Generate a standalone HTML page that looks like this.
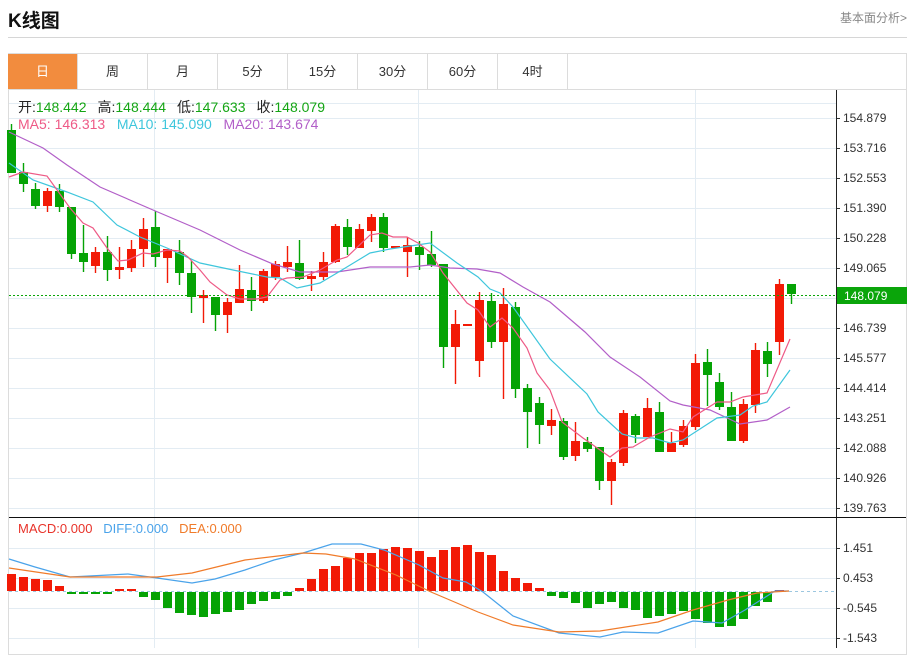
<!DOCTYPE html>
<html><head><meta charset="utf-8">
<style>
body{margin:0;width:913px;height:648px;background:#fff;font-family:"Liberation Sans","Noto Sans CJK SC",sans-serif;overflow:hidden;position:relative}
.t{position:absolute;left:8px;top:6px;font-size:19px;font-weight:bold;color:#111}
.r{position:absolute;right:6px;top:9px;font-size:12px;color:#888}
.sep{position:absolute;left:8px;top:37px;width:899px;height:1px;background:#d6d6d6}
.box{position:absolute;left:8px;top:53px;width:897px;height:600px;border:1px solid #dcdcdc}
.tab{position:absolute;top:54px;height:35px;width:69px;border-right:1px solid #dcdcdc;border-bottom:1px solid #dcdcdc;text-align:center;line-height:35px;font-size:13px;color:#333}
.tab.on{background:#f28c3e;color:#fff}
.tabrest{position:absolute;top:54px;left:567px;width:339px;height:35px;border-bottom:1px solid #dcdcdc}
.l1{position:absolute;left:18px;top:97px;font-size:14px;color:#222;word-spacing:0}
.l1 b{font-weight:normal;color:#14a514;margin-right:11px}
.l2{position:absolute;left:18px;top:116px;font-size:14px}
.m{position:absolute;left:18px;top:521px;font-size:13px}
svg{position:absolute;left:0;top:0}
</style></head><body>
<div class="t">K线图</div>
<div class="r">基本面分析&gt;</div>
<div class="sep"></div>
<div class="box"></div>
<div class="tab on" style="left:8px">日</div>
<div class="tab" style="left:78px">周</div>
<div class="tab" style="left:148px">月</div>
<div class="tab" style="left:218px">5分</div>
<div class="tab" style="left:288px">15分</div>
<div class="tab" style="left:358px">30分</div>
<div class="tab" style="left:428px">60分</div>
<div class="tab" style="left:498px">4时</div>
<div class="tabrest"></div>
<svg id="s" width="913" height="648" xmlns="http://www.w3.org/2000/svg"></svg>
<div class="l1">开:<b>148.442</b>高:<b>148.444</b>低:<b>147.633</b>收:<b>148.079</b></div>
<div class="l2"><span style="color:#ee5a86">MA5: 146.313</span>&nbsp;&nbsp; <span style="color:#3ec6dc">MA10: 145.090</span>&nbsp;&nbsp; <span style="color:#b25fc8">MA20: 143.674</span></div>
<div class="m"><span style="color:#e8332a">MACD:0.000</span>&nbsp;&nbsp; <span style="color:#4aa3ea">DIFF:0.000</span>&nbsp;&nbsp; <span style="color:#f07b2a">DEA:0.000</span></div>
<script>
var s='';
var G='#e3ecf3';
var labs=['154.879','153.716','152.553','151.390','150.228','149.065','','146.739','145.577','144.414','143.251','142.088','140.926','139.763'];
for(var i=0;i<14;i++){var y=118+30*i;s+='<line x1="9" x2="836" y1="'+(y+.5)+'" y2="'+(y+.5)+'" stroke="'+G+'"/>';
 if(labs[i]) s+='<line x1="836" x2="840" y1="'+(y+.5)+'" y2="'+(y+.5)+'" stroke="#333"/><text x="843" y="'+(y+4)+'" font-size="12" fill="#333">'+labs[i]+'</text>';}
s+='<line x1="9" x2="836" y1="103.5" y2="103.5" stroke="'+G+'"/>';
[154.5,418.5,695.5].forEach(function(x){s+='<line x1="'+x+'" x2="'+x+'" y1="90" y2="648" stroke="'+G+'"/>';});
[548,578,608,638].forEach(function(y,k){s+='<line x1="9" x2="836" y1="'+(y+.5)+'" y2="'+(y+.5)+'" stroke="'+G+'"/><line x1="836" x2="840" y1="'+(y+.5)+'" y2="'+(y+.5)+'" stroke="#333"/><text x="843" y="'+(y+4)+'" font-size="12" fill="#333">'+['1.451','0.453','-0.545','-1.543'][k]+'</text>';});
s+='<line x1="9" x2="836" y1="591.5" y2="591.5" stroke="#9cc7e0" stroke-dasharray="3,3"/>';
s+='<line x1="836.5" x2="836.5" y1="90" y2="648" stroke="#222"/>';
s+='<line x1="9" x2="906" y1="517.5" y2="517.5" stroke="#111"/>';
var C=[[130,173,124,173,'g'],[172,184,163,192,'g'],[189,206,183,209,'g'],[191,206,188,212,'r'],[191,207,184,212,'g'],[207,254,207,259,'g'],[253,262,225,272,'g'],[252,266,247,273,'r'],[252,270,236,281,'g'],[267,270,247,279,'r'],[249,268,240,272,'r'],[229,249,218,267,'r'],[227,257,211,267,'g'],[249,258,249,283,'r'],[252,273,240,285,'g'],[273,297,261,313,'g'],[295,298,290,323,'r'],[297,315,297,331,'g'],[302,315,298,333,'r'],[289,303,265,303,'r'],[290,301,277,311,'g'],[271,301,269,303,'r'],[264,277,261,280,'r'],[262,267,246,272,'r'],[263,279,240,280,'g'],[276,279,271,291,'r'],[262,277,252,280,'r'],[226,262,224,263,'r'],[227,247,219,255,'g'],[229,248,224,248,'r'],[217,231,214,242,'r'],[217,248,213,252,'g'],[246,248,246,248,'r'],[245,252,237,277,'r'],[247,255,241,270,'g'],[254,265,231,267,'g'],[264,347,264,368,'g'],[324,347,310,384,'r'],[324,326,324,326,'r'],[300,361,292,377,'r'],[301,342,293,348,'g'],[304,342,288,399,'r'],[307,389,302,398,'g'],[388,412,384,448,'g'],[403,425,397,444,'g'],[420,426,409,435,'r'],[421,457,418,460,'g'],[441,456,422,461,'r'],[442,449,437,452,'g'],[447,481,447,490,'g'],[462,481,459,505,'r'],[413,463,410,466,'r'],[416,435,414,443,'g'],[408,437,398,437,'r'],[412,452,402,452,'g'],[443,452,432,452,'r'],[426,445,420,447,'r'],[363,427,354,430,'r'],[362,375,349,406,'g'],[382,407,373,410,'g'],[407,441,392,441,'g'],[404,441,399,443,'r'],[350,405,343,413,'r'],[351,364,342,377,'g'],[284,342,279,355,'r'],[284,294,284,304,'g']];
function X(i){return 11+12*i;}
C.forEach(function(c,i){var x=X(i),col=c[4]=='r'?'#f21a06':'#05a305';
 s+='<line x1="'+(x+.5)+'" x2="'+(x+.5)+'" y1="'+c[2]+'" y2="'+c[3]+'" stroke="'+col+'" stroke-width="1.4"/>';
 s+='<rect x="'+(x-4)+'" y="'+c[0]+'" width="9" height="'+Math.max(1.5,c[1]-c[0])+'" fill="'+col+'"/>';});
function pl(p,col){s+='<polyline fill="none" stroke="'+col+'" stroke-width="1.2" points="'+p+'"/>';}
pl('9,132 43,148 67,165 100,187 153,210 200,230 240,250 273,264 300,272 337,272 370,267 410,267 430,265 450,268 477,269 500,273 523,287 550,302 585,332 610,357 640,377 670,401 683,405 710,410 740,424 767,420 790,407','#b25fc8');
pl('9,163 33,180 67,192 93,202 117,225 140,237 167,248 200,263 233,270 267,277 280,278 297,288 320,283 337,273 370,253 390,249 417,245 430,243 457,263 478,277 490,289 500,293 513,307 550,359 587,394 598,412 622,434 637,438 653,438 670,443 683,440 717,418 740,415 753,406 767,402 790,370','#3ec6dc');
pl('9,177 23,172 47,176 70,208 83,223 93,228 107,248 118,261 128,260 143,253 153,254 167,250 180,251 188,257 200,270 210,282 227,295 240,299 257,299 267,297 280,280 287,278 303,277 320,270 337,260 347,257 370,235 382,233 393,237 407,237 418,243 430,252 443,273 467,303 478,310 490,327 502,318 513,328 527,348 537,373 550,390 562,422 583,438 610,457 622,448 633,447 650,437 670,429 683,432 693,417 717,402 730,402 743,397 767,393 790,339','#ee5a86');
s+='<line x1="9" x2="836" y1="295.5" y2="295.5" stroke="#0aa50a" stroke-dasharray="2,2"/>';
s+='<rect x="837" y="287" width="70" height="17" fill="#0aa50a"/><text x="844" y="300" font-size="12" fill="#fff">148.079</text>';
var M=[17,14,12,11,5,-2,-2,-2,-2,2,2,-5,-8,-16,-21,-23,-25,-22,-20,-18,-12,-9,-7,-4,3,12,22,25,33,38,38,42,44,43,40,34,41,44,46,39,36,20,13,8,3,-4,-6,-11,-16,-12,-10,-16,-18,-26,-24,-22,-19,-27,-31,-35,-34,-27,-14,-10,1];
M.forEach(function(v,i){var x=X(i)-4;if(v>0)s+='<rect x="'+x+'" y="'+(591-v)+'" width="9" height="'+v+'" fill="#f21a06"/>';else s+='<rect x="'+x+'" y="592" width="9" height="'+(-v)+'" fill="#05a305"/>';});
pl('9,559 35,567 70,577 128,574 157,578 192,583 215,579 245,570 274,560 303,553 332,544 361,544 384,550 419,565 443,578 466,582 483,592 513,616 559,633 600,637 623,632 658,633 693,621 722,623 745,610 775,591 789,591','#4aa3ea');
pl('9,568 70,577 157,577 192,573 245,560 303,553 326,554 355,559 396,575 431,592 478,612 513,625 559,632 600,631 658,622 693,610 728,600 757,593 789,591','#f07b2a');
document.getElementById('s').innerHTML=s;
</script>
</body></html>
